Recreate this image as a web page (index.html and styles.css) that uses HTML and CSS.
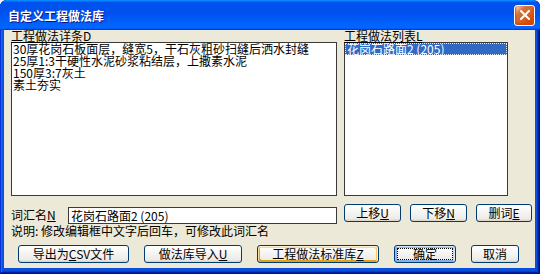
FILE: index.html
```html
<!DOCTYPE html>
<html lang="zh-CN">
<head>
  <meta charset="UTF-8" />
  <title>自定义工程做法库</title>
  <link rel="stylesheet" href="styles.css">
</head>
<body>
  <div class="window">
    <div class="titlebar">
      <span class="title">自定义工程做法库</span>
      <button class="close" title="关闭">
        <svg width="10" height="10" viewBox="0 0 10 10"><path d="M1 1L9 9M9 1L1 9" stroke="#fff" stroke-width="2" stroke-linecap="square"/></svg>
      </button>
    </div>

    <div class="client">
      <div class="lists">
        <div class="panel detail">
          <div class="caption">工程做法详条D</div>
          <div class="box memo">
            <div>30厚花岗石板面层，缝宽5，干石灰粗砂扫缝后洒水封缝</div>
            <div>25厚1:3干硬性水泥砂浆粘结层，上撒素水泥</div>
            <div>150厚3:7灰土</div>
            <div>素土夯实</div>
          </div>
        </div>
        <div class="panel catalog">
          <div class="caption">工程做法列表L</div>
          <div class="box listbox">
            <div class="item selected">花岗石路面2 (205)</div>
          </div>
        </div>
      </div>

      <div class="name-row">
        <span class="name-label">词汇名<u>N</u></span>
        <div class="input">花岗石路面2 (205)</div>
        <div class="move-btns">
          <button class="btn w-move">上移<u>U</u></button>
          <button class="btn w-move">下移<u>N</u></button>
          <button class="btn w-del">删词<u>E</u></button>
        </div>
      </div>

      <p class="note">说明: 修改编辑框中文字后回车，可修改此词汇名</p>

      <div class="actions">
        <button class="btn w-csv">导出为<u>C</u>SV文件</button>
        <button class="btn w-import">做法库导入<u>U</u></button>
        <button class="btn w-std hot">工程做法标准库<u>Z</u></button>
        <button class="btn w-ok default">确定</button>
        <button class="btn w-cancel">取消</button>
      </div>
    </div>
  </div>
</body>
</html>
```

FILE: styles.css
```css
body {
  margin: 0;
  background: #fff;
  font-family: "Noto Sans CJK SC", "Liberation Sans", sans-serif;
  font-size: 12px;
  color: #000;
}

.window {
  width: 540px;
  height: 274px;
  box-sizing: border-box;
  padding: 0 5px 6px 4px;
  background: #0a4fd9;
  border-radius: 7px 7px 0 0;
  box-shadow: inset -1px -1px #00138c, inset 1px 0 #0831d9, inset -2px -2px #001ea0,
    inset 2px 0 #166aee, inset -3px -3px #003bda, inset 3px 0 #0855dd;
  display: flex;
  flex-direction: column;
}

.titlebar {
  height: 30px;
  margin: 0 -5px 0 -4px;
  padding: 0 3px 0 8px;
  border-radius: 7px 7px 0 0;
  background: linear-gradient(180deg, #0997ff, #0053ee 8%, #0050ee 40%, #06f 88%, #06f 93%, #005bff 95%, #003dd7 96%, #003dd7);
  display: flex;
  align-items: center;
  justify-content: space-between;
}

.title {
  color: #fff;
  font-weight: bold;
  font-size: 12px;
  text-shadow: 1px 1px #0f1089;
}

.close {
  width: 21px;
  height: 21px;
  margin-right: 2px;
  padding: 0;
  border: 1px solid #fff;
  border-radius: 3px;
  background: radial-gradient(circle at 90% 90%, #cc4600 0%, #dc6527 55%, #cd7546 70%, #ffccb2 90%, #fff 100%);
  box-shadow: inset 0 -1px 2px 1px #da4600;
  display: flex;
  align-items: center;
  justify-content: center;
}

.client {
  flex: 1;
  background: #ece9d8;
  padding: 0 0 0 7px;
}

.lists {
  display: flex;
  gap: 7px;
}

.caption {
  height: 12px;
  line-height: 12px;
  text-decoration: underline;
}

.box {
  box-sizing: border-box;
  height: 154px;
  background: #fff;
  border: 1px solid #3a3a3a;
}

.detail { width: 326px; }
.catalog { width: 164px; }

.memo {
  padding: 0 1px;
  line-height: 12px;
  white-space: nowrap;
}

.item {
  height: 12px;
  line-height: 12px;
  padding-left: 2px;
}

.item.selected {
  background: #316ac5;
  color: #fff;
  outline: 1px dotted #dfe8f8;
  outline-offset: -1px;
}

.name-row {
  display: flex;
  align-items: flex-start;
  margin-top: 8px;
  height: 20px;
}

.name-label {
  width: 57px;
  margin-top: 5px;
  line-height: 12px;
}

.input {
  box-sizing: border-box;
  width: 269px;
  height: 17px;
  margin-top: 3px;
  padding-left: 2px;
  line-height: 15px;
  background: #fff;
  border: 1px solid #3a3a3a;
}

.move-btns {
  display: flex;
  gap: 9px;
  margin-left: 7px;
}

.note {
  margin: 1px 0 0;
  line-height: 12px;
}

.actions {
  display: flex;
  gap: 15px;
  margin: 8px 0 0 7px;
}

.btn {
  box-sizing: border-box;
  height: 18px;
  padding: 0;
  font: inherit;
  font-size: 12px;
  line-height: 14px;
  color: #000;
  background: linear-gradient(180deg, #fff, #ecebe6 86%, #d6d0c5);
  border: 1px solid #003c74;
  border-radius: 3px;
}

.btn.hot {
  box-shadow: inset -1px 1px #fff0cf, inset 1px 2px #fdd889, inset -2px 2px #fbc761, inset 2px -2px #e5a01a;
}

.btn.default {
  box-shadow: inset -1px 1px #cee7ff, inset 1px 2px #98b8ea, inset -2px 2px #bcd4f6, inset 1px -1px #89ade4, inset 2px -2px #89ade4;
  outline: 1px dotted #000;
  outline-offset: -4px;
}

.w-move { width: 57px; }
.w-del { width: 56px; }
.w-csv { width: 111px; }
.w-import { width: 98px; }
.w-std { width: 122px; }
.w-ok { width: 62px; }
.w-cancel { width: 48px; }
```
